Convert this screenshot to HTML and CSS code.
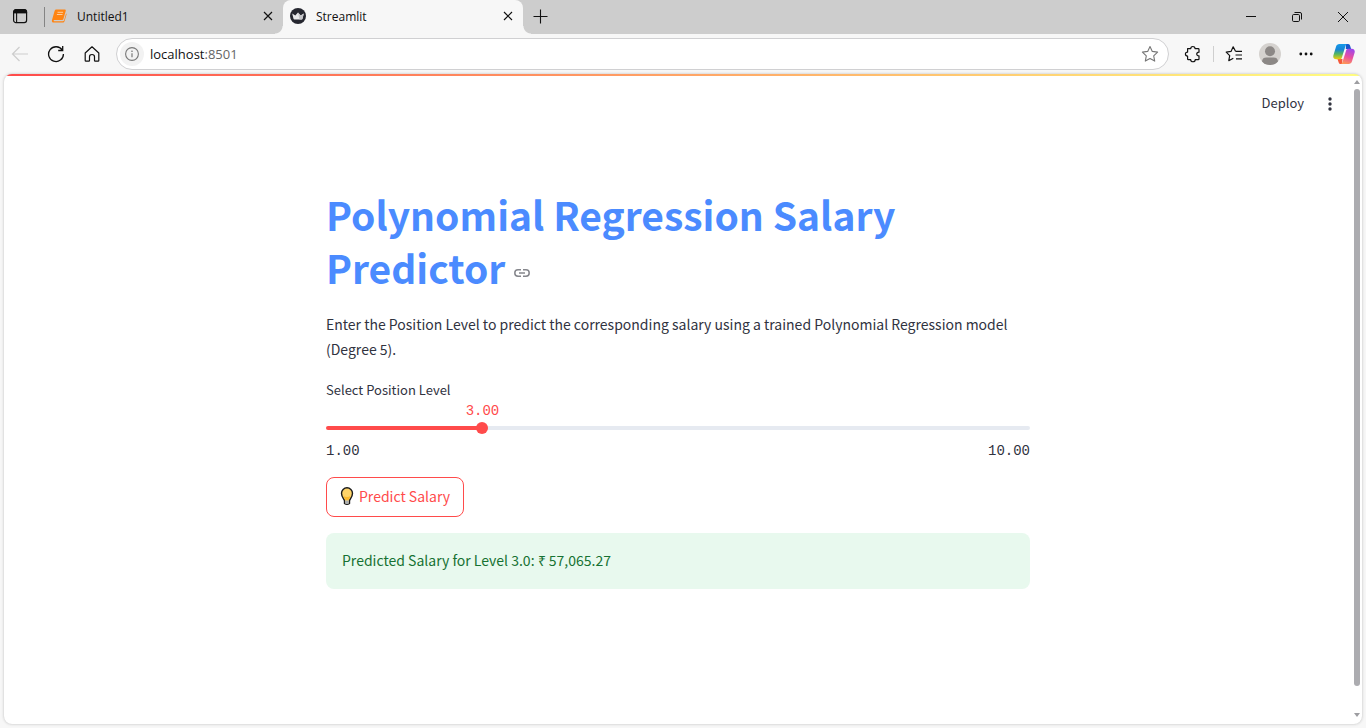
FILE: index.html
```html
<!DOCTYPE html>
<html lang="en">
<head>
<meta charset="utf-8">
<meta name="viewport" content="width=device-width, initial-scale=1">
<title>Streamlit</title>
<link rel="stylesheet" href="styles.css">
</head>
<body>
<div class="tab-strip">
  <button class="icon-btn tab-actions" aria-label="Tab actions">
    <svg width="16" height="16" viewBox="0 0 16 16" fill="none" stroke="#111"><rect x="1.6" y="1.6" width="13" height="13" rx="2.4" stroke-width="1.2"/><path d="M1.6 4.2V4a2.4 2.4 0 0 1 2.4-2.4h8.2A2.4 2.4 0 0 1 14.6 4v.9h-13z" fill="#111"/><path d="M4.6 5v9.6" stroke-width="1.1"/></svg>
  </button>
  <div class="tab">
    <svg width="16" height="16" viewBox="0 0 16 16"><path d="M5.400 1.600h8.200c1 0 1.400.6 1.100 1.500l-2.300 7.900c-.2.700-.6 1-1.300 1H3.300c-.8 0-1 1.300-.1 1.300h8.500c.7 0 1.200-.3 1.400-1l2-6.900.3.300c.3.3.2.600.1.900l-2 6.700c-.3.900-.8 1.300-1.700 1.300H2.700C1.200 14.600.500 13.300 1 11.900l2.500-8.600c.3-1.100.9-1.700 1.900-1.700z" fill="#ff8412"/><path d="M6.500 4.300h5.600M5.900 6.500h5.600" stroke="#ffd7ae" stroke-width=".9"/></svg>
    <span class="tab-title">Untitled1</span>
    <button class="icon-btn" aria-label="Close Untitled1"><svg width="10" height="10" viewBox="0 0 10 10" stroke="#111" stroke-width="1.2"><path d="M1 1l8 8M9 1L1 9"/></svg></button>
  </div>
  <div class="tab tab-active">
    <svg width="16" height="16" viewBox="0 0 16 16"><circle cx="8" cy="8" r="8" fill="#262730"/><path d="M2.200 5.600l3.100 1.800L8 4.500l2.700 2.900 3.100-1.800-1.300 5.100q-.2.700-.9.700H4.400q-.7 0-.9-.7z" fill="#e9e9eb"/><path d="M8 4.500l2.700 2.900 3.100-1.800-1.300 5.100q-.2.700-.9.700H9.500z" fill="#c4c4c8"/></svg>
    <span class="tab-title">Streamlit</span>
    <button class="icon-btn" aria-label="Close Streamlit"><svg width="10" height="10" viewBox="0 0 10 10" stroke="#111" stroke-width="1.2"><path d="M1 1l8 8M9 1L1 9"/></svg></button>
  </div>
  <button class="icon-btn new-tab" aria-label="New tab"><svg width="15" height="15" viewBox="0 0 15 15" stroke="#111"><path d="M7.500 .5v14M.5 7.500h14" stroke-width="1.100"/></svg></button>
  <div class="window-controls">
    <button class="icon-btn" aria-label="Minimize"><svg width="12" height="12" viewBox="0 0 12 12"><path d="M1 5.500h10" stroke="#111"/></svg></button>
    <button class="icon-btn" aria-label="Restore"><svg width="12" height="12" viewBox="0 0 12 12" fill="none" stroke="#111"><rect x="1.500" y="3.500" width="7" height="7" rx="1.200"/><path d="M3.500 1.500H9a1.500 1.500 0 0 1 1.500 1.500v5.500"/></svg></button>
    <button class="icon-btn" aria-label="Close window"><svg width="12" height="12" viewBox="0 0 12 12" stroke="#111"><path d="M1 1l10 10M11 1L1 11"/></svg></button>
  </div>
</div>

<div class="toolbar">
  <button class="icon-btn" aria-label="Back"><svg width="18" height="18" viewBox="0 0 18 18" fill="none" stroke="#cdcdcd" stroke-width="1.200"><path d="M17 9H1.500M8.500 2l-7 7 7 7"/></svg></button>
  <button class="icon-btn" aria-label="Refresh"><svg width="18" height="18" viewBox="0 0 18 18" fill="none" stroke="#111" stroke-width="1.300"><path d="M15.200 5.100A7.400 7.400 0 1 0 16.400 9"/><path d="M15.700 1v4.500h-4.500"/></svg></button>
  <button class="icon-btn" aria-label="Home"><svg width="18" height="18" viewBox="0 0 18 18" fill="none" stroke="#111" stroke-width="1.200" stroke-linejoin="round"><path d="M2.200 8L9 1.800 15.800 8v7.500q0 .7-.7.700h-2.900q-.7 0-.7-.7v-3.800Q11.500 9.500 9 9.500T6.500 11.700v3.800q0 .7-.7.700H2.900q-.7 0-.7-.7z"/></svg></button>
  <div class="address">
    <button class="icon-btn site-info" aria-label="Site information"><svg width="14" height="14" viewBox="0 0 14 14" fill="none" stroke="#777"><circle cx="7" cy="7" r="6.400" stroke-width="1.100"/><path d="M7 6.200v4" stroke-width="1.200"/><circle cx="7" cy="4.200" r=".4"/></svg></button>
    <a class="url" href="#">localhost<span class="port">:8501</span></a>
    <button class="icon-btn" aria-label="Add to favorites"><svg width="18" height="18" viewBox="0 0 18 18" fill="none" stroke="#777" stroke-width="1.100" stroke-linejoin="round"><path d="M9 1.500l2.300 4.900 5.300.7-3.900 3.700 1 5.300L9 13.500l-4.700 2.600 1-5.300L1.400 7.100l5.300-.7z"/></svg></button>
  </div>
  <div class="toolbar-right">
    <button class="icon-btn" aria-label="Extensions"><svg width="18" height="18" viewBox="0 0 18 18" fill="none" stroke="#111" stroke-width="1.200" stroke-linejoin="round"><path d="M3.600 3.600h3.200C6.600.8 11.100.8 11 3.600h3.200q.8 0 .8.800v2.800c-3-.2-3 3.900 0 3.700v3q0 .8-.8.800H11.200c0 2.700-4.600 2.700-4.500 0H4.400q-.8 0-.8-.8v-2.700c-2.900 0-2.900-4.200 0-4.100z"/></svg></button>
    <span class="divider"></span>
    <button class="icon-btn" aria-label="Favorites"><svg width="18" height="18" viewBox="0 0 18 18" fill="none" stroke="#111" stroke-width="1.200" stroke-linejoin="round"><path d="M10.500 6.300L8.200 1.800 6 6.400l-4.800.7 3.500 3.500-.9 5.100 4.500-2.400M10.500 6.300h6.500M10.500 10h6.500M11 13.800h6"/></svg></button>
    <button class="icon-btn" aria-label="Profile"><svg width="22" height="22" viewBox="0 0 22 22"><defs><clipPath id="avatar"><circle cx="11" cy="11" r="11"/></clipPath></defs><circle cx="11" cy="11" r="11" fill="#d5d2cf"/><g fill="#8c8886" clip-path="url(#avatar)"><circle cx="11" cy="8.200" r="5"/><path d="M3 19q0-4.400 4.500-4.400h7Q19 14.600 19 19l-3 4H6z"/></g></svg></button>
    <button class="icon-btn" aria-label="Settings and more"><svg width="14" height="4" viewBox="0 0 14 4" fill="#111"><circle cx="1.800" cy="2" r="1.400"/><circle cx="7" cy="2" r="1.400"/><circle cx="12.200" cy="2" r="1.400"/></svg></button>
    <button class="icon-btn copilot" aria-label="Copilot"><svg width="22" height="22" viewBox="0 0 22 22"><defs><linearGradient id="cl" x1="0" y1="0" x2="0" y2="1"><stop offset="0" stop-color="#169ae8"/><stop offset=".35" stop-color="#1685d8"/><stop offset=".65" stop-color="#54b660"/><stop offset="1" stop-color="#f5cc0a"/></linearGradient><linearGradient id="cr" x1=".6" y1="0" x2=".3" y2="1"><stop offset="0" stop-color="#a047ea"/><stop offset=".5" stop-color="#e84fa0"/><stop offset="1" stop-color="#ff9a55"/></linearGradient></defs><path d="M13 1h2.200c1 0 1.600.8 1.900 1.800l1 3.200h-5.300z" fill="#1857cc"/><path d="M9 21H7.500c-1 0-1.600-.8-1.900-1.800L4.500 16h5z" fill="#f4593b"/><path d="M6.500 1h8c-1 0-1.600.8-2 2L8.900 14.400c-.4 1.200-1 1.900-2.200 1.900H3.200C.8 16.300-.3 14.500.5 12L3 3.700C3.500 2 4.700 1 6.500 1z" fill="url(#cl)"/><path d="M15.500 21h-8c1 0 1.600-.8 2-2l3.600-11.400c.4-1.200 1-1.900 2.200-1.900h3.500c2.400 0 3.500 1.800 2.700 4.300L19 18.300c-.5 1.700-1.700 2.700-3.500 2.700z" fill="url(#cr)"/></svg></button>
  </div>
</div>

<div class="viewport">
  <div class="app">
    <header class="app-header">
      <button class="deploy">Deploy</button>
      <button class="icon-btn" aria-label="Main menu"><svg width="4" height="14" viewBox="0 0 4 14" fill="#31333f"><circle cx="2" cy="2" r="1.700"/><circle cx="2" cy="7" r="1.700"/><circle cx="2" cy="12" r="1.700"/></svg></button>
    </header>
    <main class="content">
      <h1>Polynomial Regression Salary Predictor <a class="anchor" href="#top" aria-label="Link to heading"><svg width="16" height="8" viewBox="0 0 16 8" fill="none" stroke="#85868c" stroke-width="1.500"><path d="M7 .8H4a3.200 3.200 0 0 0 0 6.400h3M9 .8h3a3.200 3.200 0 0 1 0 6.400H9M5 4h6"/></svg></a></h1>
      <p class="intro">Enter the Position Level to predict the corresponding salary using a trained Polynomial Regression model (Degree 5).</p>
      <div class="slider">
        <label for="level">Select Position Level</label>
        <div class="slider-track" style="--pos: 22.222%">
          <output class="slider-value" for="level">3.00</output>
          <input id="level" type="range" min="1" max="10" step="0.01" value="3">
        </div>
        <div class="slider-ends"><span>1.00</span><span>10.00</span></div>
      </div>
      <button class="predict">
        <svg width="16" height="20" viewBox="0 0 16 20"><path d="M5.500 17.500V15C5.500 13 2.500 11.500 2.500 7.300a5.500 5.500 0 0 1 11 0C13.500 11.500 10.500 13 10.500 15v2.500q-2.500 1.800-5 0z" fill="#ffd469" stroke="#1b1b1b" stroke-width="1.400"/><path d="M6.200 14.500h3.600v3q-1.800 1.200-3.600 0z" fill="#a9adb2"/><path d="M4.400 10q3.600 2 7.200 0l-2 4H6.400z" fill="#fbb92f"/></svg>
        <span>Predict Salary</span>
      </button>
      <div class="alert" role="alert">Predicted Salary for Level 3.0: ₹ 57,065.27</div>
    </main>
  </div>
  <div class="scrollbar" aria-hidden="true">
    <svg width="6" height="4" viewBox="0 0 6 4"><path d="M3 0l3 4H0z" fill="#9d9da1"/></svg>
    <div class="scroll-track"><div class="scroll-thumb"></div></div>
    <svg width="6" height="4" viewBox="0 0 6 4"><path d="M3 4l3-4H0z" fill="#9d9da1"/></svg>
  </div>
</div>
</body>
</html>
```
FILE: styles.css
```css
* {
  box-sizing: border-box;
}

body {
  margin: 0;
  height: 100vh;
  display: flex;
  flex-direction: column;
  background: #f7f7f7;
  color: #31333f;
  font-family: "Noto Sans CJK SC", sans-serif;
}

button {
  font: inherit;
  cursor: pointer;
}

.icon-btn {
  display: flex;
  align-items: center;
  justify-content: center;
  padding: 0;
  border: 0;
  background: none;
}

svg {
  display: block;
  flex: none;
}

/* Browser tabs */
.tab-strip {
  display: flex;
  height: 34px;
  flex: none;
  background: #cdcdcd;
  color: #111;
  font-family: "Open Sans", sans-serif;
  font-size: 12px;
}

.tab-actions {
  width: 40px;
  padding-bottom: 2px;
}

.tab {
  position: relative;
  display: flex;
  align-items: center;
  width: 239px;
  gap: 10px;
  padding: 0 10px 2px 7px;
}

.tab:not(.tab-active) {
  margin-left: 4px;
}

.tab:not(.tab-active)::before {
  content: "";
  position: absolute;
  left: 0;
  top: 7px;
  height: 20px;
  border-left: 1px solid #848484;
}

.tab-active {
  width: 240px;
  background: #f7f7f7;
  border-radius: 8px 8px 0 0;
}

.tab-active::before,
.tab-active::after {
  content: "";
  position: absolute;
  bottom: 0;
  width: 8px;
  height: 8px;
}

.tab-active::before {
  right: 100%;
  background: radial-gradient(circle at 0 0, transparent 7px, #f7f7f7 8px);
}

.tab-active::after {
  left: 100%;
  background: radial-gradient(circle at 100% 0, transparent 7px, #f7f7f7 8px);
}

.tab-title {
  flex: 1;
}

.new-tab {
  width: 34px;
  padding-bottom: 2px;
}

.window-controls {
  display: flex;
  margin-left: auto;
}

.window-controls .icon-btn {
  width: 46px;
}

/* Address bar row */
.toolbar {
  display: flex;
  align-items: center;
  height: 40px;
  flex: none;
  gap: 18px;
  padding: 0 11px;
}

.address {
  display: flex;
  align-items: center;
  flex: 1;
  height: 32px;
  margin: 0 -3px;
  padding: 0 9px 0 3px;
  gap: 6px;
  background: #fff;
  border: 1px solid #d0d0d2;
  border-radius: 16px;
}

.site-info {
  width: 24px;
  height: 24px;
  border-radius: 50%;
  background: #f2f2f2;
}

.url {
  flex: 1;
  color: #111;
  font-family: "Open Sans", sans-serif;
  font-size: 13px;
  text-decoration: none;
}

.port {
  color: #666;
}

.toolbar-right {
  display: flex;
  align-items: center;
  gap: 16px;
}

.toolbar-right .icon-btn {
  min-width: 18px;
}

.divider {
  height: 16px;
  margin: 0 -5px;
  border-left: 1px solid #cfcfcf;
}

.toolbar-right .copilot {
  margin-left: 2px;
}

/* Page area */
.viewport {
  display: flex;
  flex: 1;
  min-height: 0;
  margin: 0 4px 4px;
  overflow: hidden;
  background: linear-gradient(90deg, #ff4b4b, #fffd80) top / 100% 2px no-repeat #fff;
  border-radius: 8px;
  box-shadow: 0 0 3px #bbb;
}

.app {
  flex: 1;
}

.app-header {
  display: flex;
  align-items: center;
  justify-content: flex-end;
  gap: 24px;
  height: 60px;
  padding-right: 20px;
}

.deploy {
  padding: 0 0 3px;
  border: 0;
  background: none;
  color: #31333f;
  font-size: 13px;
}

.content {
  max-width: 736px;
  margin: 0 auto;
  padding: 54px 16px;
}

h1 {
  margin: 0 0 18px;
  color: #4b8bff;
  font-size: 39px;
  font-weight: 700;
  line-height: 53px;
}

.anchor {
  display: inline-block;
  vertical-align: middle;
}

.intro {
  margin: 0 0 16px;
  font-size: 14px;
  line-height: 25px;
}

.slider {
  display: flex;
  flex-direction: column;
  margin-bottom: 16px;
}

.slider label {
  margin-bottom: 24px;
  font-size: 13px;
  line-height: 24px;
}

.slider-track {
  position: relative;
  display: flex;
  align-items: center;
  height: 4px;
  border-radius: 2px;
  background: linear-gradient(90deg, #ff4b4b var(--pos), #e6eaf1 var(--pos));
}

.slider-track input {
  appearance: none;
  flex: 1;
  height: 12px;
  margin: 0 -6px;
  background: none;
}

.slider-track input::-webkit-slider-thumb {
  appearance: none;
  width: 12px;
  height: 12px;
  border: 0;
  border-radius: 50%;
  background: #ff4b4b;
}

.slider-value,
.slider-ends {
  font-family: "Liberation Mono", monospace;
  font-size: 14px;
  line-height: 20px;
}

.slider-value {
  position: absolute;
  bottom: 9px;
  left: var(--pos);
  transform: translateX(-50%);
  color: #ff4b4b;
}

.slider-ends {
  display: flex;
  justify-content: space-between;
  margin-top: 11px;
}

.predict {
  display: flex;
  align-items: center;
  gap: 4px;
  height: 40px;
  margin-bottom: 16px;
  padding: 0 13px 2px 12px;
  background: #fff;
  border: 1px solid #ff4b4b;
  border-radius: 8px;
  color: #ff4b4b;
  font-size: 14px;
}

.alert {
  padding: 15px 16px 17px;
  background: #e8f9ee;
  border-radius: 8px;
  color: #177233;
  font-size: 14px;
  line-height: 24px;
}

.scrollbar {
  display: flex;
  flex-direction: column;
  align-items: center;
  width: 10px;
  padding: 6px 0 7px;
  gap: 5px;
}

.scroll-track {
  flex: 1;
  padding-bottom: 22px;
}

.scroll-thumb {
  width: 6px;
  height: 100%;
  border-radius: 3px;
  background: #acacb0;
}
```
